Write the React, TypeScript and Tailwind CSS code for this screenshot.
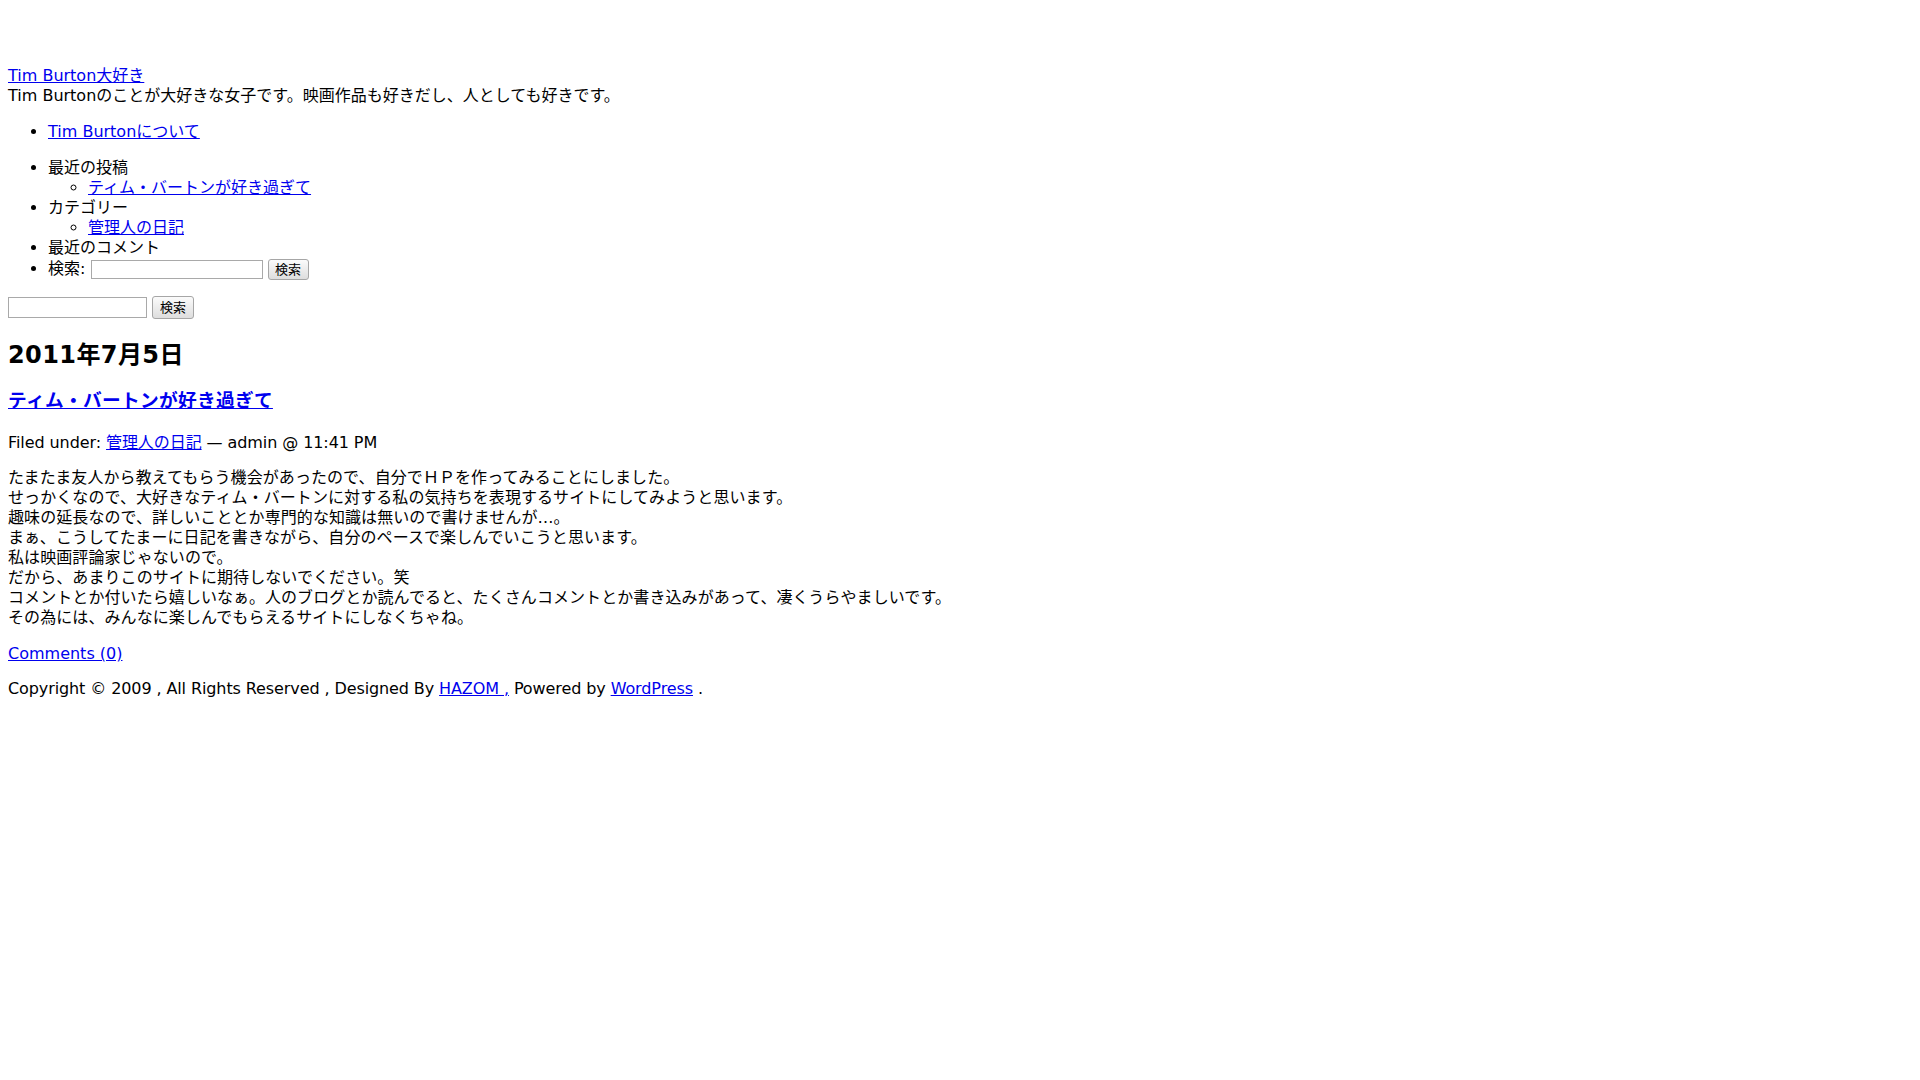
// Blog page: Tim Burton fan site, unstyled WordPress theme look
const link = 'text-[#0000ee] underline';

export default function App() {
  return (
    <div className="m-2 pt-[58px] font-['DejaVu_Sans','Noto_Sans_CJK_JP',sans-serif] text-[16px] leading-[20px] text-black">
      <div>
        <a href="#" className={link}>Tim Burton大好き</a>
      </div>
      <div>Tim Burtonのことが大好きな女子です。映画作品も好きだし、人としても好きです。</div>

      <ul className="mt-4 list-disc pl-10">
        <li>
          <a href="#" className={link}>Tim Burtonについて</a>
        </li>
      </ul>

      <ul className="mt-4 list-disc pl-10">
        <li>
          最近の投稿
          <ul className="list-[circle] pl-10">
            <li>
              <a href="#" className={link}>ティム・バートンが好き過ぎて</a>
            </li>
          </ul>
        </li>
        <li>
          カテゴリー
          <ul className="list-[circle] pl-10">
            <li>
              <a href="#" className={link}>管理人の日記</a>
            </li>
          </ul>
        </li>
        <li>最近のコメント</li>
        <li className="h-[21px] leading-[21px]">
          検索:{' '}
          <input type="text" className="h-[19px] w-[172px] border border-[#a9a9a9] bg-white align-middle" />{' '}
          <button className="h-[21px] w-[41px] rounded-[3px] border border-[#a6a6a6] bg-gradient-to-b from-[#fbfbfb] to-[#dedede] align-middle text-[13px] leading-[17px]">
            検索
          </button>
        </li>
      </ul>

      <form className="mt-4 h-[23px] leading-[23px]">
        <input type="text" className="h-[21px] w-[139px] border border-[#a9a9a9] bg-white align-middle" />{' '}
        <button type="button" className="h-[23px] w-[42px] rounded-[3px] border border-[#a6a6a6] bg-gradient-to-b from-[#fbfbfb] to-[#dedede] align-middle text-[13px] leading-[17px]">
          検索
        </button>
      </form>

      <h2 className="mt-[22px] text-[24px] font-bold leading-[30px] tracking-[0.4px]">2011年7月5日</h2>

      <h3 className="mt-[19px] text-[18.72px] font-bold leading-[24px] tracking-[0.3px]">
        <a href="#" className={link}>ティム・バートンが好き過ぎて</a>
      </h3>

      <p className="mt-5 tracking-[-0.08px]">
        Filed under: <a href="#" className={link}>管理人の日記</a> — admin @ 11:41 PM
      </p>

      <p className="mt-[15px] tracking-[0.08px]">
        たまたま友人から教えてもらう機会があったので、自分でＨＰを作ってみることにしました。<br />
        せっかくなので、大好きなティム・バートンに対する私の気持ちを表現するサイトにしてみようと思います。<br />
        趣味の延長なので、詳しいこととか専門的な知識は無いので書けませんが…。<br />
        まぁ、こうしてたまーに日記を書きながら、自分のペースで楽しんでいこうと思います。<br />
        私は映画評論家じゃないので。<br />
        だから、あまりこのサイトに期待しないでください。笑<br />
        コメントとか付いたら嬉しいなぁ。人のブログとか読んでると、たくさんコメントとか書き込みがあって、凄くうらやましいです。<br />
        その為には、みんなに楽しんでもらえるサイトにしなくちゃね。
      </p>

      <p className="mt-4">
        <a href="#" className={link}>Comments (0)</a>
      </p>

      <p className="mt-[15px] tracking-[-0.1px]">
        Copyright © 2009 , All Rights Reserved , Designed By <a href="#" className={link}>HAZOM ,</a> Powered by{' '}
        <a href="#" className={link}>WordPress</a> .
      </p>
    </div>
  );
}
